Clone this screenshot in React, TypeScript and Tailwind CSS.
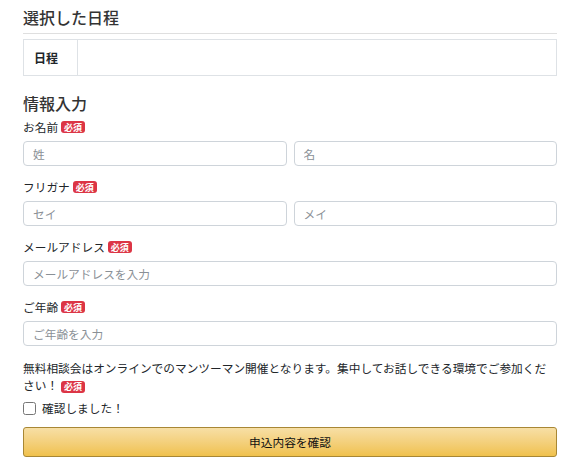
const font = { fontFamily: '"Noto Sans CJK JP", "Noto Sans", sans-serif' };

function Required() {
  return (
    <span className="ml-[3px] inline-flex h-[12px] items-center rounded-[3px] bg-[#dc3545] px-[3px] align-middle text-[9px] leading-none font-bold text-white">
      必須
    </span>
  );
}

function Field({ label, children }: { label: string; children: React.ReactNode }) {
  return (
    <div className="mt-[11px] first:mt-0">
      <div className="flex h-[20px] items-center text-[11.7px] text-[#212529]">
        {label}
        <Required />
      </div>
      <div className="mt-[4px] flex gap-[7px]">{children}</div>
    </div>
  );
}

function Input({ placeholder }: { placeholder: string }) {
  return (
    <input
      type="text"
      placeholder={placeholder}
      className="h-[25px] min-w-0 flex-1 rounded-[4px] border border-[#ced4da] bg-white px-[9px] text-[11.7px] text-[#212529] outline-none placeholder:text-[#8a9096]"
    />
  );
}

export default function App() {
  return (
    <div className="min-h-[470px] bg-white pt-[5px] pr-[21px] pl-[23px]" style={font}>
      <h2 className="border-b border-[#dfdfdf] pb-[4px] text-[16px] leading-[24px] font-medium text-[#333]">
        選択した日程
      </h2>

      <table className="mt-[5px] w-full border-collapse border border-[#dee2e6]">
        <tbody>
          <tr className="h-[36px]">
            <th className="w-[54px] border border-[#dee2e6] pl-[10px] text-left text-[12px] font-bold text-[#212529]">
              日程
            </th>
            <td className="border border-[#dee2e6]"></td>
          </tr>
        </tbody>
      </table>

      <h2 className="mt-[15px] text-[16px] leading-[24px] font-medium text-[#333]">情報入力</h2>

      <div className="mt-[2px]">
        <Field label="お名前">
          <Input placeholder="姓" />
          <Input placeholder="名" />
        </Field>
        <Field label="フリガナ">
          <Input placeholder="セイ" />
          <Input placeholder="メイ" />
        </Field>
        <Field label="メールアドレス">
          <Input placeholder="メールアドレスを入力" />
        </Field>
        <Field label="ご年齢">
          <Input placeholder="ご年齢を入力" />
        </Field>
      </div>

      <p className="mt-[13px] text-[11.7px] leading-[17px] text-[#212529]">
        無料相談会はオンラインでのマンツーマン開催となります。集中してお話しできる環境でご参加ください！
        <Required />
      </p>

      <label className="mt-[6px] flex h-[18px] items-center gap-[6px] text-[11.7px] text-[#212529]">
        <input type="checkbox" className="m-0 h-[13px] w-[13px]" />
        確認しました！
      </label>

      <button
        type="button"
        className="mt-[10px] h-[30px] w-full rounded-[3px] border border-[#a88734] bg-gradient-to-b from-[#f7dfa5] to-[#f0c14b] text-[11.7px] text-[#111]"
      >
        申込内容を確認
      </button>
    </div>
  );
}
